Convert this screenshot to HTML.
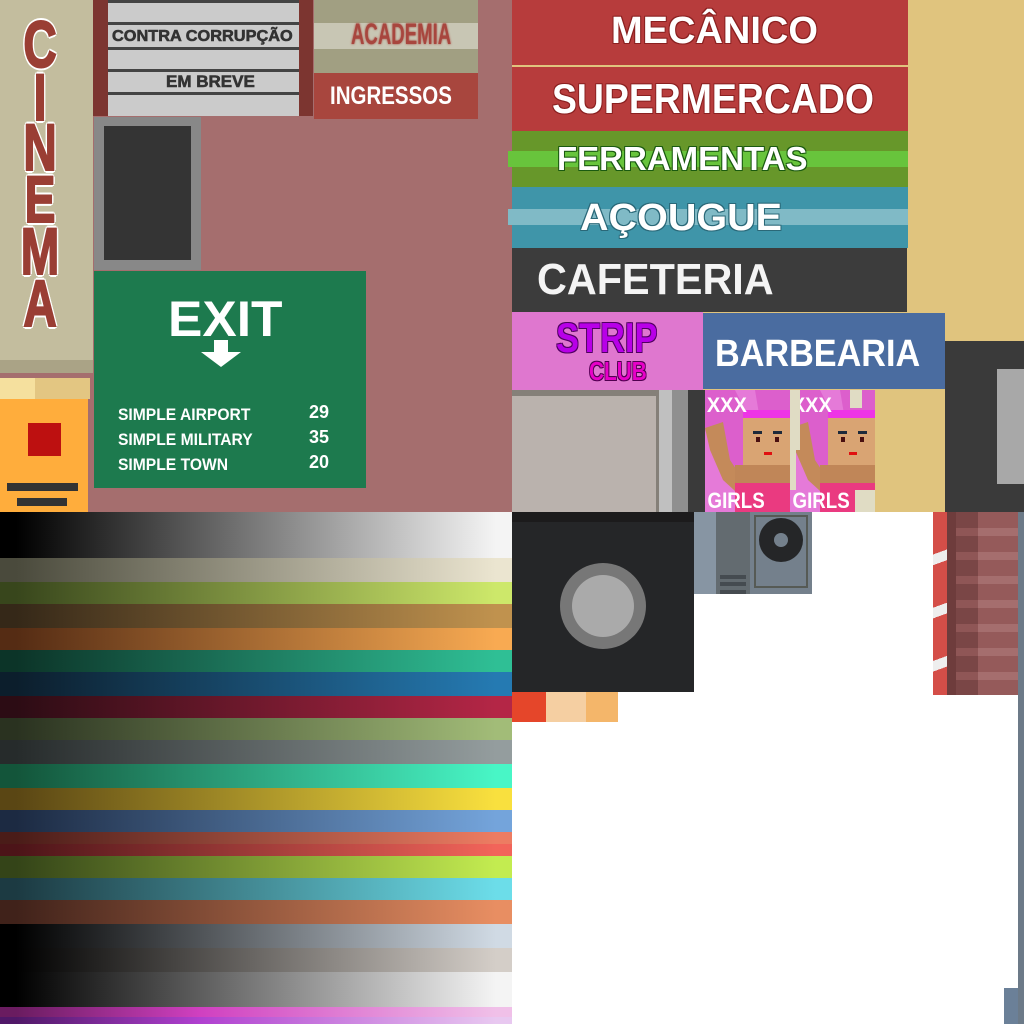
<!DOCTYPE html>
<html><head><meta charset="utf-8"><style>
*{margin:0;padding:0;box-sizing:border-box}
body{width:1024px;height:1024px;position:relative;overflow:hidden;background:#fff;font-family:"Liberation Sans",sans-serif}
.a{position:absolute}
.t{position:absolute;font-weight:bold;white-space:nowrap;line-height:1}
.cin{position:absolute;left:40px;width:0;font-weight:bold;font-size:66px;color:#9a3e34;line-height:1;
 text-shadow:2px 0 #fff,-2px 0 #fff,0 2px #fff,0 -2px #fff,2px 2px #fff,-2px -2px #fff,2px -2px #fff,-2px 2px #fff,3px 0 #fff,-3px 0 #fff,0 3px #fff,0 -3px #fff}
.cin span{display:inline-block;transform:translateX(-50%) scaleX(.7);-webkit-text-stroke:2px #9a3e34}
.row{position:absolute;left:0;width:512px}
</style></head><body>
<div class="a" style="left:0;top:0;width:512px;height:512px;background:#a56e6e"></div>
<div class="a" style="left:0;top:0;width:93px;height:360px;background:#c3bd9e"></div>
<div class="a" style="left:0;top:360px;width:93px;height:13px;background:#aaa386"></div>
<div class="cin" style="top:11px"><span>C</span></div>
<div class="cin" style="top:64px"><span>I</span></div>
<div class="cin" style="top:114px"><span>N</span></div>
<div class="cin" style="top:166px"><span>E</span></div>
<div class="cin" style="top:218px"><span>M</span></div>
<div class="cin" style="top:270px"><span>A</span></div>
<div class="a" style="left:0;top:378px;width:35px;height:21px;background:#f5e09e"></div>
<div class="a" style="left:35px;top:378px;width:55px;height:21px;background:#e3c682"></div>
<div class="a" style="left:0;top:399px;width:88px;height:113px;background:#ffad3c"></div>
<div class="a" style="left:28px;top:423px;width:33px;height:33px;background:#bd1010"></div>
<div class="a" style="left:7px;top:483px;width:71px;height:8px;background:#333"></div>
<div class="a" style="left:17px;top:498px;width:50px;height:8px;background:#333"></div>
<div class="a" style="left:93px;top:0;width:220px;height:116px;background:#7c3530"></div>
<div class="a" style="left:108px;top:0;width:191px;height:116px;background:#cbcbcb"></div>
<div class="a" style="left:108px;top:0;width:191px;height:3px;background:#444"></div>
<div class="a" style="left:108px;top:22px;width:191px;height:3px;background:#444"></div>
<div class="a" style="left:108px;top:47px;width:191px;height:3px;background:#444"></div>
<div class="a" style="left:108px;top:69px;width:191px;height:3px;background:#444"></div>
<div class="a" style="left:108px;top:92px;width:191px;height:3px;background:#444"></div>
<div class="t" style="left:112px;top:29px;font-size:16px;color:#333;-webkit-text-stroke:.6px #333;transform:scaleX(1.02);transform-origin:left">CONTRA CORRUPÇÃO</div>
<div class="t" style="left:166px;top:73px;font-size:17px;color:#333;-webkit-text-stroke:.6px #333">EM BREVE</div>
<div class="a" style="left:314px;top:0;width:164px;height:73px;background:#a19f82"></div>
<div class="a" style="left:314px;top:23px;width:164px;height:26px;background:#c8c6b4"></div>
<div class="t" style="left:351px;top:20px;font-size:30px;color:#a8463e;transform:scaleX(.62);transform-origin:left;text-shadow:0 0 3px #a8463e">ACADEMIA</div>
<div class="a" style="left:314px;top:73px;width:164px;height:46px;background:#a8463e"></div>
<div class="t" style="left:330px;top:84px;font-size:25px;color:#fff;transform:scaleX(.82);transform-origin:left">INGRESSOS</div>
<div class="a" style="left:94px;top:117px;width:107px;height:153px;background:#888"></div>
<div class="a" style="left:104px;top:126px;width:87px;height:134px;background:#343434"></div>
<div class="a" style="left:94px;top:271px;width:272px;height:217px;background:#1d7a4e"></div>
<div class="t" style="left:168px;top:294px;font-size:50px;color:#fff;transform:scaleX(1.03);transform-origin:left">EXIT</div>
<svg class="a" style="left:201px;top:340px" width="40" height="28"><path d="M13 0h14v12h13L20 27 0 12h13z" fill="#fff"/></svg>
<div class="t" style="left:118px;top:402px;font-size:17px;color:#fff;line-height:25px;transform:scaleX(.92);transform-origin:left">SIMPLE AIRPORT<br>SIMPLE MILITARY<br>SIMPLE TOWN</div>
<div class="t" style="left:309px;top:400px;font-size:18px;color:#fff;line-height:25px">29<br>35<br>20</div>

<div class="a" style="left:512px;top:0;width:512px;height:512px;background:#e0c47e"></div>
<div class="a" style="left:512px;top:0;width:396px;height:65px;background:#b73c3c"></div>
<div class="a" style="left:512px;top:67px;width:396px;height:64px;background:#b73c3c"></div>
<div class="t" style="left:611px;top:12px;font-size:38px;color:#fff;text-shadow:1px 1px #8a2020,-1px -1px #8a2020,1px -1px #8a2020,-1px 1px #8a2020">MECÂNICO</div>
<div class="t" style="left:552px;top:78px;font-size:42px;color:#fff;text-shadow:1px 1px #8a2020,-1px -1px #8a2020,1px -1px #8a2020,-1px 1px #8a2020;transform:scaleX(.89);transform-origin:left">SUPERMERCADO</div>
<div class="a" style="left:512px;top:131px;width:396px;height:56px;background:#67972a"></div>
<div class="a" style="left:508px;top:151px;width:400px;height:16px;background:#68c43c"></div>
<div class="t" style="left:557px;top:142px;font-size:33px;color:#fff;text-shadow:1px 1px #1a5a10,-1px -1px #1a5a10,1px -1px #1a5a10,-1px 1px #1a5a10;transform:scaleX(1.0);transform-origin:left">FERRAMENTAS</div>
<div class="a" style="left:512px;top:187px;width:396px;height:61px;background:#3f95a9"></div>
<div class="a" style="left:508px;top:209px;width:400px;height:16px;background:#80bac6"></div>
<div class="t" style="left:580px;top:199px;font-size:38px;color:#fff;text-shadow:1px 1px #2a6878,-1px -1px #2a6878,1px -1px #2a6878,-1px 1px #2a6878;transform:scaleX(1.04);transform-origin:left">AÇOUGUE</div>
<div class="a" style="left:512px;top:248px;width:395px;height:64px;background:#3c3c3c"></div>
<div class="t" style="left:537px;top:258px;font-size:44px;color:#f4f4f4;transform:scaleX(.94);transform-origin:left">CAFETERIA</div>
<div class="a" style="left:512px;top:312px;width:191px;height:78px;background:#df77cf"></div>
<div class="t" style="left:556px;top:317px;font-size:42px;color:#b800e8;transform:scaleX(.82);transform-origin:left;text-shadow:1px 1px #500060,-1px -1px #500060,1px -1px #500060,-1px 1px #500060">STRIP</div>
<div class="t" style="left:589px;top:358px;font-size:26px;color:#e800c8;transform:scaleX(.8);transform-origin:left;text-shadow:1px 1px #500050,-1px -1px #500050,1px -1px #500050,-1px 1px #500050">CLUB</div>
<div class="a" style="left:703px;top:313px;width:242px;height:76px;background:#4a6ca0"></div>
<div class="t" style="left:715px;top:335px;font-size:38px;color:#fff;transform:scaleX(.9);transform-origin:left">BARBEARIA</div>
<div class="a" style="left:945px;top:341px;width:79px;height:171px;background:#3a3a3a"></div>
<div class="a" style="left:997px;top:369px;width:27px;height:115px;background:#a8a8a8"></div>
<div class="a" style="left:512px;top:390px;width:147px;height:122px;background:#858079"></div>
<div class="a" style="left:512px;top:396px;width:144px;height:116px;background:#bab2ad"></div>
<div class="a" style="left:659px;top:390px;width:13px;height:122px;background:#c0c0c0"></div>
<div class="a" style="left:672px;top:390px;width:16px;height:122px;background:#8f8f8f"></div>
<div class="a" style="left:688px;top:390px;width:17px;height:122px;background:#3a3a3a"></div>
<svg class="a" style="left:705px;top:390px" width="170" height="122">
 <defs><g id="p">
 <rect width="85" height="122" fill="#dc5fcc"/>
 <path d="M0 40 L40 122 L0 122Z M30 0 L60 60 L50 0Z" fill="#e57ad8"/>
 <path d="M0 38 L18 32 L25 70 L45 100 L40 110 L18 90 L5 60Z" fill="#c48a5a"/>
 <rect x="38" y="20" width="50" height="10" fill="#ee34e6"/>
 <rect x="38" y="28" width="50" height="50" fill="#d9a473"/>
 <rect x="30" y="75" width="55" height="20" fill="#c08658"/>
 <rect x="48" y="41" width="9" height="3" fill="#1e2a3a"/><rect x="68" y="41" width="9" height="3" fill="#1e2a3a"/>
 <rect x="51" y="47" width="4" height="5" fill="#4a1010"/><rect x="70" y="47" width="4" height="5" fill="#4a1010"/>
 <rect x="59" y="62" width="8" height="3" fill="#e01010"/>
 <rect x="30" y="93" width="55" height="29" fill="#ea3a80"/>
 <text x="2" y="22" font-family="Liberation Sans" font-weight="bold" font-size="21" fill="#fff" transform="scale(.95 1)">XXX</text>
 <text x="3" y="118" font-family="Liberation Sans" font-weight="bold" font-size="22" fill="#fff" transform="scale(.85 1)">GIRLS</text>
 </g></defs>
 <use href="#p" x="0"/>
 <use href="#p" x="85"/>
 <rect x="85" y="0" width="10" height="60" fill="#e0dcc4"/><rect x="85" y="60" width="6" height="40" fill="#e0dcc4"/>
 <rect x="145" y="0" width="12" height="18" fill="#e0dcc4"/><rect x="150" y="100" width="20" height="22" fill="#e0dcc4"/>
</svg>
<div class="a" style="left:512px;top:512px;width:182px;height:180px;background:#252628"></div>
<div class="a" style="left:512px;top:512px;width:182px;height:10px;background:#1c1b1c"></div>
<div class="a" style="left:560px;top:563px;width:86px;height:86px;border-radius:50%;background:#777"></div>
<div class="a" style="left:572px;top:575px;width:62px;height:62px;border-radius:50%;background:#aaa"></div>
<div class="a" style="left:694px;top:512px;width:118px;height:82px;background:#636b70"></div>
<div class="a" style="left:694px;top:512px;width:22px;height:82px;background:#8795a3"></div>
<div class="a" style="left:750px;top:512px;width:62px;height:82px;background:#74808c"></div>
<div class="a" style="left:754px;top:515px;width:54px;height:73px;border:2px solid #565a55"></div>
<div class="a" style="left:759px;top:518px;width:44px;height:44px;border-radius:50%;background:#252628"></div>
<div class="a" style="left:774px;top:533px;width:14px;height:14px;border-radius:50%;background:#74808c"></div>
<div class="a" style="left:720px;top:575px;width:26px;height:4px;background:#454b50"></div>
<div class="a" style="left:720px;top:582px;width:26px;height:4px;background:#454b50"></div>
<div class="a" style="left:720px;top:590px;width:26px;height:4px;background:#454b50"></div>
<div class="a" style="left:933px;top:512px;width:14px;height:183px;background:repeating-linear-gradient(160deg,#d44e48 0 40px,#eee 40px 50px)"></div>
<div class="a" style="left:947px;top:512px;width:9px;height:183px;background:#6e3c3c"></div>
<div class="a" style="left:956px;top:512px;width:22px;height:183px;background:repeating-linear-gradient(180deg,#7a4646 0 16px,#8f5656 16px 24px)"></div>
<div class="a" style="left:978px;top:512px;width:40px;height:183px;background:repeating-linear-gradient(180deg,#955a5a 0 16px,#a56e6e 16px 24px)"></div>
<div class="a" style="left:1018px;top:512px;width:6px;height:512px;background:#6c7a88"></div>
<div class="a" style="left:1004px;top:988px;width:14px;height:36px;background:#6b8098"></div>
<div class="a" style="left:512px;top:692px;width:34px;height:30px;background:#e5462a"></div>
<div class="a" style="left:546px;top:692px;width:40px;height:30px;background:#f5cfa2"></div>
<div class="a" style="left:586px;top:692px;width:32px;height:30px;background:#f4b66a"></div>

<div class="row" style="top:512px;height:46px;background:linear-gradient(90deg,#000 16px,#f4f4f4 496px)"></div>
<div class="row" style="top:558px;height:24px;background:linear-gradient(90deg,#4a4a3c 16px,#ebe5d0 496px)"></div>
<div class="row" style="top:582px;height:22px;background:linear-gradient(90deg,#38461c 16px,#cde86a 496px)"></div>
<div class="row" style="top:604px;height:24px;background:linear-gradient(90deg,#352818 16px,#c0924e 496px)"></div>
<div class="row" style="top:628px;height:22px;background:linear-gradient(90deg,#552c14 16px,#f8aa52 496px)"></div>
<div class="row" style="top:650px;height:22px;background:linear-gradient(90deg,#0c3428 16px,#2fbf95 496px)"></div>
<div class="row" style="top:672px;height:24px;background:linear-gradient(90deg,#0c1e2c 16px,#257ab2 496px)"></div>
<div class="row" style="top:696px;height:22px;background:linear-gradient(90deg,#2c0c14 16px,#b42646 496px)"></div>
<div class="row" style="top:718px;height:22px;background:linear-gradient(90deg,#2a3220 16px,#a2bc78 496px)"></div>
<div class="row" style="top:740px;height:24px;background:linear-gradient(90deg,#262b2b 16px,#949d9e 496px)"></div>
<div class="row" style="top:764px;height:24px;background:linear-gradient(90deg,#13553a 16px,#48f6c6 496px)"></div>
<div class="row" style="top:788px;height:22px;background:linear-gradient(90deg,#5a4614 16px,#f9e03e 496px)"></div>
<div class="row" style="top:810px;height:22px;background:linear-gradient(90deg,#1c2a42 16px,#74a4db 496px)"></div>
<div class="row" style="top:832px;height:12px;background:linear-gradient(90deg,#4a1c18 16px,#ed7c62 496px)"></div>
<div class="row" style="top:844px;height:12px;background:linear-gradient(90deg,#4c1418 16px,#f2645a 496px)"></div>
<div class="row" style="top:856px;height:22px;background:linear-gradient(90deg,#344418 16px,#c3ec50 496px)"></div>
<div class="row" style="top:878px;height:22px;background:linear-gradient(90deg,#1c3a42 16px,#6cdde9 496px)"></div>
<div class="row" style="top:900px;height:24px;background:linear-gradient(90deg,#40221a 16px,#e88e62 496px)"></div>
<div class="row" style="top:924px;height:24px;background:linear-gradient(90deg,#000 16px,#d0dae4 496px)"></div>
<div class="row" style="top:948px;height:24px;background:linear-gradient(90deg,#000 16px,#d4cec8 496px)"></div>
<div class="row" style="top:972px;height:35px;background:linear-gradient(90deg,#000 16px,#f4f4f4 496px)"></div>
<div class="row" style="top:1007px;height:10px;background:linear-gradient(90deg,#6a1c60 16px,#d040c0 200px,#f0c0e8 496px)"></div>
<div class="row" style="top:1017px;height:7px;background:linear-gradient(90deg,#501868 16px,#b040d0 200px,#e8c8f0 496px)"></div>
</body></html>
